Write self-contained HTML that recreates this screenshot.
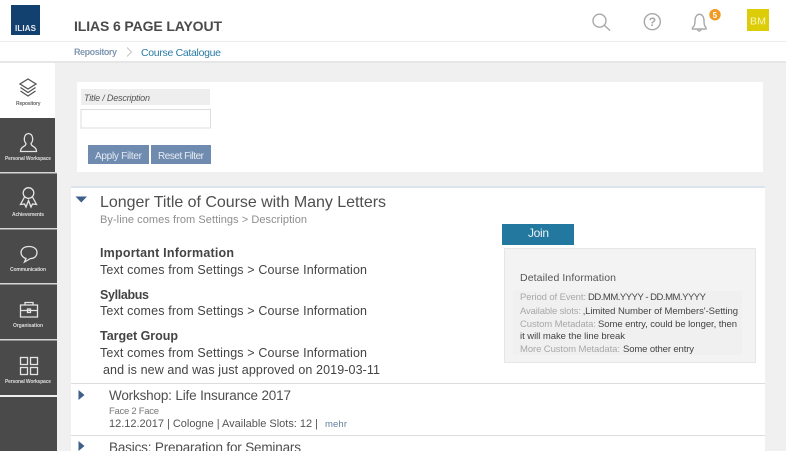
<!DOCTYPE html>
<html><head><meta charset="utf-8"><style>
html,body{margin:0;padding:0;width:786px;height:451px;overflow:hidden;background:#fff}
svg{display:block;filter:blur(.3px)}
text{font-family:"Liberation Sans",sans-serif}
</style></head><body>
<svg width="786" height="451" viewBox="0 0 786 451" xmlns="http://www.w3.org/2000/svg">
<rect width="786" height="451" fill="#fff"/>
<!-- background -->
<rect x="55" y="62" width="731" height="389" fill="#f0f0f0"/>
<rect x="0" y="41" width="786" height="1" fill="#ececec"/>
<rect x="0" y="61" width="786" height="2" fill="#e6e6e6"/>
<!-- logo -->
<rect x="11" y="5" width="29" height="30" fill="#12406f"/>
<text x="15" y="31" font-size="8" font-weight="bold" fill="#e8edf3" textLength="21">ILIAS</text>
<text x="74" y="31" font-size="14" font-weight="bold" fill="#4a4a4a" textLength="148">ILIAS 6 PAGE LAYOUT</text>
<!-- breadcrumb -->
<text x="74" y="55" font-size="9" font-weight="bold" fill="#8197b3" textLength="43">Repository</text>
<path d="M127 47.500L131.500 52L127 56.500" fill="none" stroke="#c4c4c4" stroke-width="1"/>
<text x="141" y="56" font-size="10.500" fill="#2a7ba6" textLength="80">Course Catalogue</text>
<!-- top icons -->
<g fill="none" stroke="#a8a8a8" stroke-width="1.400">
<circle cx="599.500" cy="20.700" r="6.500"/><path d="M604.500 25.500L610 30.500"/>
<circle cx="652.300" cy="21.700" r="8"/>
<path d="M692.500 29V27.500C694.500 26.500 695 24 695 21C695 12 704 12 704 21C704 24 704.500 26.500 706 27.500V29ZM697.500 29.500C698 31.500 700.500 31.500 701 29.500"/>
</g>
<text x="648.800" y="25.800" font-size="12" font-weight="bold" fill="#a8a8a8">?</text>
<circle cx="715" cy="14.700" r="5.700" fill="#f09a23"/>
<text x="712.600" y="18" font-size="8" font-weight="bold" fill="#fff">5</text>
<rect x="747" y="9" width="22" height="22" fill="#dccd08"/>
<text x="750" y="24.500" font-size="10.500" fill="#f7f5c5" textLength="16">BM</text>
<!-- sidebar -->
<rect x="0" y="118" width="55" height="55" fill="#4a4a4a"/>
<rect x="0" y="173" width="57" height="278" fill="#4a4a4a"/>
<rect x="0" y="172" width="57" height="1.500" fill="#d6d6d6"/>
<rect x="0" y="228" width="57" height="1.500" fill="#d6d6d6"/>
<rect x="0" y="283" width="57" height="1.500" fill="#d6d6d6"/>
<rect x="0" y="339" width="57" height="1.500" fill="#d6d6d6"/>
<rect x="0" y="395" width="57" height="2" fill="#eeeeee"/>
<g fill="none" stroke="#555" stroke-width="1.300">
<path d="M28 79L36 84L28 89L20 84Z"/><path d="M20.500 87.500L28 92.500L35.500 87.500"/><path d="M20.500 91L28 96L35.500 91"/>
</g>
<text x="16" y="105" font-size="5" font-weight="bold" fill="#666" textLength="24.500">Repository</text>
<g fill="none" stroke="#e4e4e4" stroke-width="1.300">
<path d="M20.500 151.500C20.500 146 26 147 26 143.500C23.500 141 23.500 134 28.500 133.500C33.500 134 33.500 141 31 143.500C31 147 36.500 146 36.500 151.500Z"/>
<circle cx="28.500" cy="193" r="5.300"/><path d="M24.500 197L20.500 204.500L24.500 204L26 207L28.500 200.500L31 207L32.500 204L36.500 204.500L32.500 197"/>
<path d="M29 246.500C23 246.500 21 250 21 252.500C21 255.500 23.500 258 26 258.500L24.500 262L30.500 258.500C35 258.500 37 255.500 37 252.500C37 249.500 34.500 246.500 29 246.500Z"/>
<path d="M20.500 305H37.500V317H20.500ZM25 305V302.500H33V305M20.500 310.500H37.500"/><rect x="27.500" y="309" width="3" height="3.500"/>
<rect x="20.500" y="357.500" width="7" height="7"/><rect x="30.500" y="357.500" width="7" height="7"/><rect x="20.500" y="367.500" width="7" height="7"/><rect x="30.500" y="367.500" width="7" height="7"/>
</g>
<g font-size="5" font-weight="bold" fill="#dcdcdc">
<text x="5" y="160" textLength="46">Personal Workspace</text>
<text x="12" y="216" textLength="32">Achievements</text>
<text x="10" y="271" textLength="36">Communication</text>
<text x="13" y="327" textLength="30">Organisation</text>
<text x="5" y="383" textLength="46">Personal Workspace</text>
</g>
<!-- filter panel -->
<rect x="77" y="82" width="686" height="90" fill="#fff"/>
<rect x="81" y="89" width="129" height="16" fill="#eeeeee"/>
<text x="84" y="101" font-size="9" font-style="italic" fill="#555" textLength="66">Title / Description</text>
<rect x="81" y="109.500" width="129.500" height="18.500" fill="#fff" stroke="#dddddd"/>
<rect x="88" y="145" width="61" height="19" fill="#6f8bb0"/>
<rect x="151" y="145" width="60" height="19" fill="#6f8bb0"/>
<text x="95" y="159" font-size="10" fill="#e6ebf2" textLength="47">Apply Filter</text>
<text x="158" y="159" font-size="10" fill="#e6ebf2" textLength="46">Reset Filter</text>
<!-- main -->
<rect x="71" y="187" width="694" height="264" fill="#fff"/>
<rect x="71" y="186" width="694" height="2" fill="#dbe3ec"/>
<path d="M75.500 196.500H87L81.250 202.500Z" fill="#3e5f8a"/>
<text x="100" y="207" font-size="16" fill="#4f4f4f" textLength="286">Longer Title of Course with Many Letters</text>
<text x="100" y="223" font-size="11" fill="#8e8e8e" textLength="207">By-line comes from Settings &gt; Description</text>
<g fill="#444" font-size="12.500">
<text x="100" y="257" font-weight="bold" textLength="134">Important Information</text>
<text x="100" y="274" textLength="267">Text comes from Settings &gt; Course  Information</text>
<text x="100" y="299" font-weight="bold" textLength="49">Syllabus</text>
<text x="100" y="315" textLength="267">Text comes from Settings &gt; Course  Information</text>
<text x="100" y="340" font-weight="bold" textLength="78">Target Group</text>
<text x="100" y="357" textLength="267">Text comes from Settings &gt; Course  Information</text>
<text x="103" y="374" textLength="277">and is new and was just approved on 2019-03-11</text>
</g>
<!-- join -->
<rect x="502" y="224" width="72" height="21" fill="#23789f"/>
<text x="528" y="237" font-size="12" fill="#e9f2f6" textLength="21">Join</text>
<!-- info box -->
<rect x="504.500" y="248.500" width="251" height="114" fill="#f3f3f3" stroke="#e6e6e6"/>
<rect x="513" y="291" width="229" height="64" fill="#f0f0f0"/>
<text x="520" y="281" font-size="10.500" fill="#555" textLength="96">Detailed Information</text>
<g font-size="9.500">
<text x="520" y="300" fill="#a8a8a8" textLength="66">Period of Event:</text>
<text x="588" y="300" fill="#444" textLength="118">DD.MM.YYYY - DD.MM.YYYY</text>
<text x="520" y="314" fill="#a8a8a8" textLength="61">Available slots:</text>
<text x="583" y="314" fill="#444" textLength="155">‚Limited Number of Members'-Setting</text>
<text x="520" y="327" fill="#a8a8a8" textLength="76">Custom Metadata:</text>
<text x="598" y="327" fill="#444" textLength="139">Some entry, could be longer, then</text>
<text x="520" y="339" fill="#444" textLength="105">it will make the line break</text>
<text x="520" y="352" fill="#a8a8a8" textLength="100">More Custom Metadata:</text>
<text x="623" y="352" fill="#444" textLength="71">Some other entry</text>
</g>
<!-- list -->
<rect x="71" y="383" width="694" height="1" fill="#dddddd"/>
<rect x="71" y="435" width="694" height="1" fill="#dddddd"/>
<path d="M78.500 390V400L84.500 395Z" fill="#3e5f8a"/>
<path d="M78.500 441V451L84.500 446Z" fill="#3e5f8a"/>
<text x="109" y="400" font-size="13.500" fill="#4f4f4f" textLength="182">Workshop: Life Insurance 2017</text>
<text x="109" y="414" font-size="9.500" fill="#777" textLength="50">Face 2 Face</text>
<text x="109" y="427" font-size="11" fill="#555" textLength="209">12.12.2017 | Cologne | Available Slots: 12 |</text>
<text x="325" y="427" font-size="9.500" fill="#64809f" textLength="22">mehr</text>
<text x="109" y="452" font-size="13.500" fill="#4f4f4f" textLength="192">Basics: Preparation for Seminars</text>
</svg>
</body></html>
